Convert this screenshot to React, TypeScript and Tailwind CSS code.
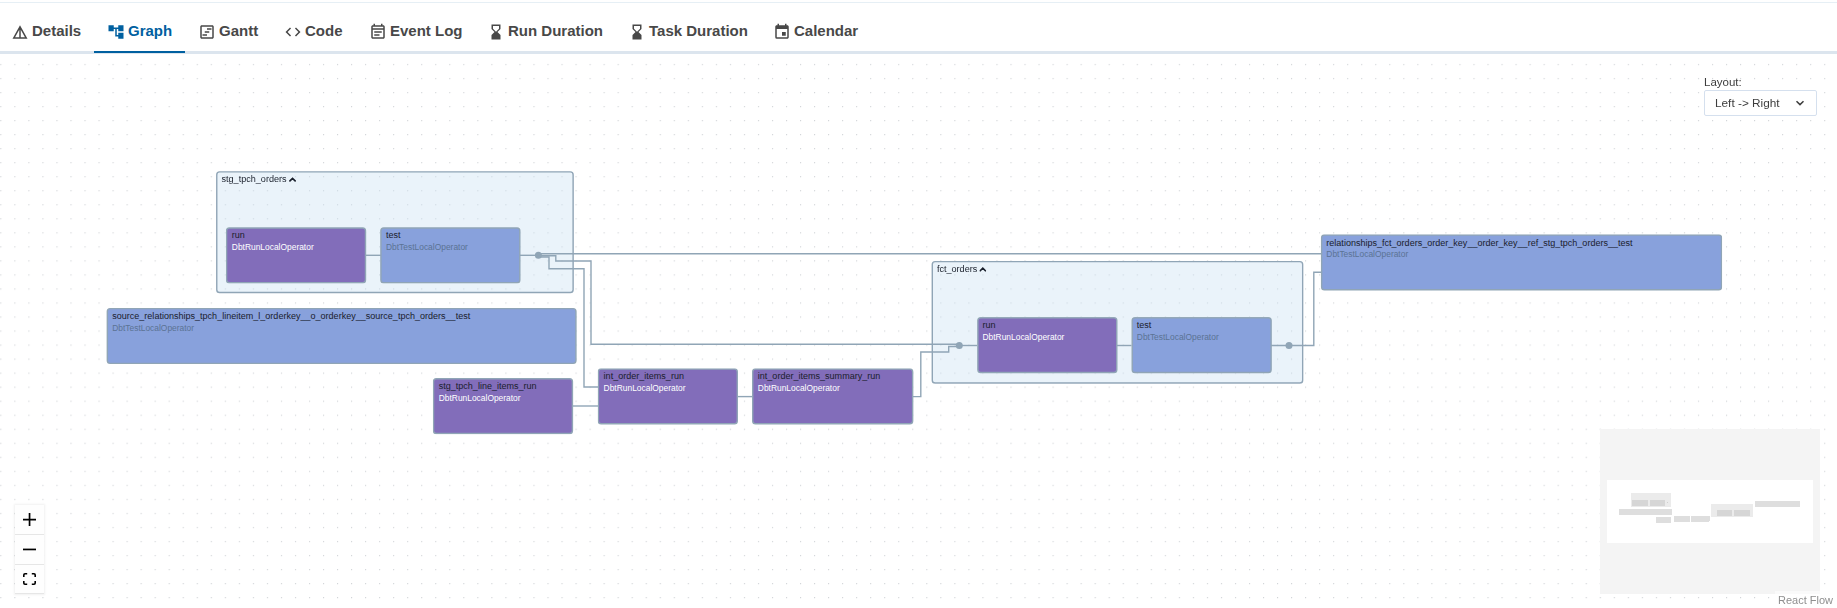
import React from "react";
import {
  MdAccountTree,
  MdCode,
  MdDetails,
  MdEvent,
  MdHourglassBottom,
  MdOutlineEventNote,
  MdOutlineViewTimeline,
} from "react-icons/md";

const ZOOM = 0.7015;
const PANE_TOP = 54;

const tabs = [
  { label: "Details", icon: MdDetails, width: "w-[96px] -ml-[2px]" },
  { label: "Graph", icon: MdAccountTree, width: "w-[91px]", active: true },
  { label: "Gantt", icon: MdOutlineViewTimeline, width: "w-[86px]" },
  { label: "Code", icon: MdCode, width: "w-[85px]" },
  { label: "Event Log", icon: MdOutlineEventNote, width: "w-[118px]" },
  { label: "Run Duration", icon: MdHourglassBottom, width: "w-[141px]" },
  { label: "Task Duration", icon: MdHourglassBottom, width: "w-[145px]" },
  { label: "Calendar", icon: MdEvent, width: "w-[114px]" },
];

type Kind = "run" | "test" | "group";
interface FlowNode {
  label: string;
  kind: Kind;
  x: number;
  y: number;
  w: number;
  h: number;
}

const nodes: FlowNode[] = [
  { label: "run", kind: "run", x: 226.2, y: 227, w: 140.3, h: 56.1 },
  { label: "test", kind: "test", x: 380.4, y: 227, w: 140.3, h: 56.1 },
  {
    label: "source_relationships_tpch_lineitem_l_orderkey__o_orderkey__source_tpch_orders__test",
    kind: "test",
    x: 106.6,
    y: 307.7,
    w: 470.2,
    h: 56.1,
  },
  { label: "stg_tpch_line_items_run", kind: "run", x: 433.1, y: 378, w: 140.3, h: 56.1 },
  { label: "int_order_items_run", kind: "run", x: 598, y: 368.5, w: 140.3, h: 56.1 },
  { label: "int_order_items_summary_run", kind: "run", x: 752.2, y: 368.5, w: 161.3, h: 56.1 },
  { label: "run", kind: "run", x: 976.9, y: 317.2, w: 140.3, h: 56.1 },
  { label: "test", kind: "test", x: 1131.2, y: 317.2, w: 140.3, h: 56.1 },
  {
    label: "relationships_fct_orders_order_key__order_key__ref_stg_tpch_orders__test",
    kind: "test",
    x: 1320.7,
    y: 234.4,
    w: 401.2,
    h: 56.1,
  },
];

const groups: FlowNode[] = [
  { label: "stg_tpch_orders", kind: "group", x: 215.9, y: 171, w: 357.6, h: 122.5 },
  { label: "fct_orders", kind: "group", x: 931.3, y: 261.2, w: 371.8, h: 122.5 },
];

const edges = [
  "M366 255.3H381",
  "M520 255.3H538.5",
  "M538.5 253.7H1321",
  "M538.5 255.8H555.8V261H591V344.3H959.3",
  "M538.5 257H549V268.8H584V387H598",
  "M573 406H598",
  "M738 396.6H752.5",
  "M913 396.6H920.8V352H948.7V346.5H959.3",
  "M959.3 345.5H977",
  "M1117 345.5H1131.5",
  "M1271 345.5H1313.8V272.2H1321",
];

const joints = [
  [538.4, 255.3],
  [959.3, 345.4],
  [1289, 345.4],
];

const miniNodes: [number, number, number, number, string][] = [
  [1631, 493, 40, 14, "#ebebeb"],
  [1632, 500, 16, 6, "#d6d6d6"],
  [1650, 500, 15, 6, "#d6d6d6"],
  [1667, 502, 1, 1, "#d0d0d0"],
  [1619, 509, 53, 6, "#dedede"],
  [1656, 517, 15, 6, "#dedede"],
  [1674, 516, 16, 6, "#dedede"],
  [1691, 516, 18, 6, "#dedede"],
  [1709, 516, 1, 5, "#dedede"],
  [1711, 504, 42, 13, "#ebebeb"],
  [1717, 510, 15, 6, "#d6d6d6"],
  [1734, 510, 16, 6, "#d6d6d6"],
  [1755, 501, 45, 6, "#dedede"],
];

const place = (n: FlowNode): React.CSSProperties => ({
  left: n.x / ZOOM,
  top: (n.y - PANE_TOP) / ZOOM,
  width: n.w / ZOOM,
  height: n.h / ZOOM,
});

function TabBar() {
  return (
    <nav className="mt-[2px] flex h-[52px] shrink-0 border-t border-b-3 border-t-[#e6eff5] border-b-[#dce5ee] text-[15px] font-bold">
      {tabs.map(({ label, icon: Icon, width, active }) => (
        <div
          key={label}
          className={`flex h-[50px] shrink-0 items-center gap-[3px] border-b-2 pt-[9px] pl-[13px] whitespace-nowrap ${width} ${
            active ? "border-[#0060a0] text-[#0060a0]" : "border-transparent text-[#484848]"
          }`}
        >
          <Icon className="size-[18px] shrink-0" />
          <span>{label}</span>
        </div>
      ))}
    </nav>
  );
}

function GroupNode({ node }: { node: FlowNode }) {
  return (
    <div
      className="absolute rounded-[5px] border-2 border-[#90a5b6] bg-[#cbe1f3]/40 pt-[3px] pl-[6px] text-[12.95px] leading-[14px] text-[#1a202c]"
      style={place(node)}
    >
      <div className="flex items-center gap-[3px]">
        <span>{node.label}</span>
        <svg viewBox="0 0 10 8" className="h-[8px] w-[10px]" fill="none" stroke="currentColor" strokeWidth="2.4">
          <path d="M1.3 6 5 2.4 8.7 6" strokeLinecap="round" />
        </svg>
      </div>
    </div>
  );
}

function TaskNode({ node }: { node: FlowNode }) {
  const run = node.kind === "run";
  return (
    <div
      className={`absolute rounded-[5px] border-2 border-[#90a5b6] pt-[2px] pl-[6px] whitespace-nowrap ${
        run ? "bg-[#826dba]" : "bg-[#88a1dc]"
      }`}
      style={place(node)}
    >
      <div className="text-[12.88px] leading-[15px] text-[#1a202c]">{node.label}</div>
      <div className={`mt-[3px] text-[12px] leading-[15px] ${run ? "text-white" : "text-[#5b7394]"}`}>
        {run ? "DbtRunLocalOperator" : "DbtTestLocalOperator"}
      </div>
    </div>
  );
}

function Graph() {
  return (
    <>
      <svg className="absolute inset-0 size-full">
        <defs>
          <pattern id="dots" x="0.3" y="9.9" width="14.03" height="14.03" patternUnits="userSpaceOnUse">
            <circle cx="0.6" cy="0.6" r="0.55" fill="#c4c8cc" />
          </pattern>
        </defs>
        <rect width="100%" height="100%" fill="url(#dots)" />
      </svg>
      <div className="absolute top-0 left-0 origin-top-left scale-[0.7015]">
        {groups.map((n) => (
          <GroupNode key={n.label} node={n} />
        ))}
      </div>
      <svg className="absolute inset-0 size-full" viewBox="0 54 1837 554" fill="none" stroke="#90a5b6" strokeWidth="1.4">
        {edges.map((d) => (
          <path key={d} d={d} />
        ))}
        {joints.map(([cx, cy]) => (
          <circle key={cx} cx={cx} cy={cy} r="3.5" fill="#90a5b6" stroke="none" />
        ))}
      </svg>
      <div className="absolute top-0 left-0 origin-top-left scale-[0.7015]">
        {nodes.map((n, i) => (
          <TaskNode key={i} node={n} />
        ))}
      </div>
    </>
  );
}

function LayoutSelect() {
  return (
    <div className="absolute top-[20px] right-[20px] w-[113px] text-[12px] text-[#3d3d3d]">
      <div className="h-[16px] text-[11.5px] leading-[17px]">Layout:</div>
      <div className="flex h-[26px] items-center justify-between rounded-[2px] border border-[#d5e0ee] bg-white pr-[11px] pl-[10px]">
        <span className="pt-px text-[11.8px]">Left -&gt; Right</span>
        <svg viewBox="0 0 10 8" className="h-[8px] w-[10px]" fill="none" stroke="currentColor" strokeWidth="1.5">
          <path d="M1.5 2.2 5 5.6 8.5 2.2" />
        </svg>
      </div>
    </div>
  );
}

function Controls() {
  const button = "flex items-center justify-center border-b border-[#e6e6e6] bg-[#fefefe]";
  return (
    <div className="absolute bottom-[14px] left-[15px] w-[29px] text-black shadow-[0_0_2px_1px_rgba(0,0,0,0.06)]">
      <div className={`${button} h-[30px]`}>
        <svg viewBox="0 0 13 13" className="size-[13px]" fill="currentColor">
          <path d="M5.7 0h1.7v5.7H13v1.7H7.4V13H5.7V7.4H0V5.7h5.7z" />
        </svg>
      </div>
      <div className={`${button} h-[30px]`}>
        <svg viewBox="0 0 13 3" className="h-[3px] w-[13px]" fill="currentColor">
          <path d="M0 .6h13v1.7H0z" />
        </svg>
      </div>
      <div className={`${button} h-[29px]`}>
        <svg viewBox="0 0 13 12" className="h-[12px] w-[13px]" fill="none" stroke="currentColor" strokeWidth="1.6">
          <path d="M.8 4V2Q.8.8 2 .8H4.2M8.8.8H11Q12.2.8 12.2 2V4M12.2 8v2Q12.2 11.2 11 11.2H8.8M4.2 11.2H2Q.8 11.2.8 10V8" />
        </svg>
      </div>
    </div>
  );
}

function MiniMap() {
  return (
    <>
      <svg
        className="absolute right-[17px] bottom-[14px] h-[165px] w-[220px] bg-[#f4f4f4]"
        viewBox="1600 429 220 165"
        shapeRendering="crispEdges"
      >
        <rect x="1607" y="480" width="206" height="63" fill="#fff" />
        {miniNodes.map(([x, y, w, h, fill], i) => (
          <rect key={i} x={x} y={y} width={w} height={h} fill={fill} />
        ))}
      </svg>
      <div className="absolute right-0 bottom-0 h-[17px] w-[62px] bg-white/50 pl-[3px] text-[11px] leading-[18px] whitespace-nowrap text-[#8f8f8f]">
        React Flow
      </div>
    </>
  );
}

export default function App() {
  return (
    <div className="flex h-[608px] w-full flex-col overflow-hidden bg-white font-['Liberation_Sans',Arial,sans-serif]">
      <TabBar />
      <main className="relative flex-1 overflow-hidden">
        <Graph />
        <LayoutSelect />
        <Controls />
        <MiniMap />
      </main>
    </div>
  );
}
